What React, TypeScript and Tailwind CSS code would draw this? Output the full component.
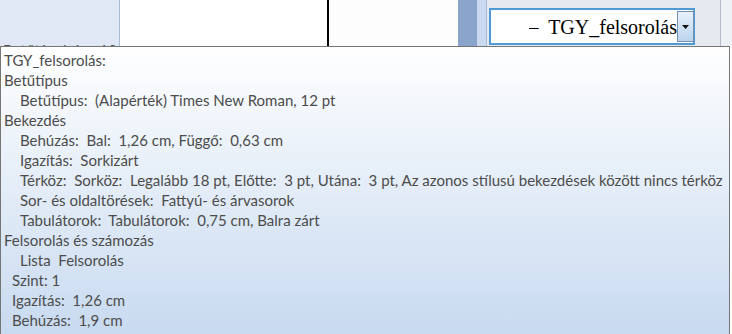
export default function App() {
  const lines: { text: string; indent: string }[] = [
    { text: 'TGY_felsorolás:', indent: 'pl-[3px]' },
    { text: 'Betűtípus', indent: 'pl-[3px]' },
    { text: 'Betűtípus:  (Alapérték) Times New Roman, 12 pt', indent: 'pl-[19px]' },
    { text: 'Bekezdés', indent: 'pl-[3px]' },
    { text: 'Behúzás:  Bal:  1,26 cm, Függő:  0,63 cm', indent: 'pl-[19px]' },
    { text: 'Igazítás:  Sorkizárt', indent: 'pl-[19px]' },
    {
      text: 'Térköz:  Sorköz:  Legalább 18 pt, Előtte:  3 pt, Utána:  3 pt, Az azonos stílusú bekezdések között nincs térköz',
      indent: 'pl-[19px]',
    },
    { text: 'Sor- és oldaltörések:  Fattyú- és árvasorok', indent: 'pl-[19px]' },
    { text: 'Tabulátorok:  Tabulátorok:  0,75 cm, Balra zárt', indent: 'pl-[19px]' },
    { text: 'Felsorolás és számozás', indent: 'pl-[3px]' },
    { text: 'Lista  Felsorolás', indent: 'pl-[19px]' },
    { text: 'Szint: 1', indent: 'pl-[11px]' },
    { text: 'Igazítás:  1,26 cm', indent: 'pl-[11px]' },
    { text: 'Behúzás:  1,9 cm', indent: 'pl-[11px]' },
  ];

  return (
    <div className="w-[732px] h-[334px] overflow-hidden bg-white flex flex-col">
      {/* document area behind the tooltip */}
      <div className="h-[46px] flex shrink-0">
        <div className="w-[120px] bg-[#dfe8f4] border-r border-[#a9bbd3] overflow-hidden flex items-end">
          <span className="pl-[3px] text-[15px] leading-[15px] text-[#555] translate-y-[12px] whitespace-pre font-['Lato',sans-serif]">
            Betűtávolság:  12 pt
          </span>
        </div>
        <div className="w-[209px] bg-white border-r-2 border-black" />
        <div className="flex-1 bg-[#fdfdfd]" />
        <div className="w-[19px] bg-[#8aa4cc]" />
        <div className="w-[10px] bg-[#c9d9ef] border-r border-[#a9bcd8]" />
        <div className="w-[245px] bg-[#e6eaf0] flex">
          <div className="flex-1 pl-[2px] pt-[8px]">
            <div className="w-[206px] h-[37px] border-2 border-[#4f9ad4] bg-white flex items-center justify-end">
              <span className="text-[20px] text-black whitespace-pre font-['Liberation_Serif',serif] overflow-hidden">
                –  TGY_felsorolás
              </span>
              <div className="w-[17px] h-[31px] mr-[-1px] border border-[#7390b0] bg-gradient-to-b from-[#e8f2fc] to-[#bcd4ee] flex items-center justify-center shrink-0">
                <svg width="7" height="4" viewBox="0 0 7 4">
                  <path d="M0 0h7L3.5 4z" fill="#111" />
                </svg>
              </div>
            </div>
          </div>
          <div className="w-[12px] border-l border-[#b3bcc8] bg-[#edf0f4]" />
        </div>
      </div>

      {/* tooltip */}
      <div className="flex-1 mr-[2px] border-t border-l border-r border-[#767676] bg-gradient-to-b from-white to-[#c8daf0] pt-[3px] font-['Lato',sans-serif] text-[15px] text-[#4c4c4c]">
        {lines.map((l, i) => (
          <div key={i} className={`${l.indent} h-[20px] leading-[20px] whitespace-pre`}>
            {l.text}
          </div>
        ))}
      </div>
    </div>
  );
}
